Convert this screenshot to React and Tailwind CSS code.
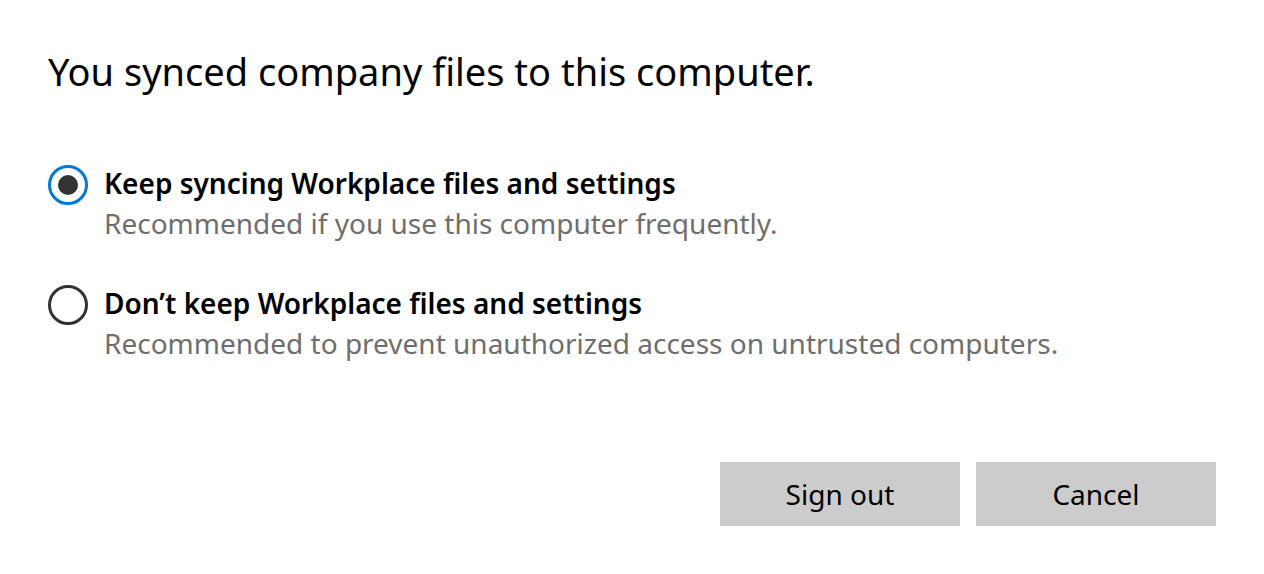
import React from "react";

function Radio({ checked }) {
  return checked ? (
    <div className="w-[40px] h-[40px] rounded-full border-[3px] border-[#0078d7] flex items-center justify-center shrink-0">
      <div className="w-[20px] h-[20px] rounded-full bg-[#333333]" />
    </div>
  ) : (
    <div className="w-[40px] h-[40px] rounded-full border-[3px] border-[#333333] shrink-0" />
  );
}

function Option({ checked, title, desc }) {
  return (
    <div className="flex items-start gap-[16px]">
      <div className="pt-[0px]">
        <Radio checked={checked} />
      </div>
      <div className="flex flex-col">
        <div className="text-[28px] leading-[36px] font-semibold text-black">{title}</div>
        <div className="text-[28px] leading-[36px] text-[#6e6e6e] mt-[4px]">{desc}</div>
      </div>
    </div>
  );
}

export default function App() {
  return (
    <div
      className="w-[1264px] h-[574px] bg-white flex flex-col px-[48px] pt-[46px]"
      style={{ fontFamily: '"Noto Sans", "Open Sans", sans-serif' }}
    >
      <h1 className="text-[38px] leading-[50px] text-black font-normal">
        You synced company files to this computer.
      </h1>
      <div className="flex flex-col gap-[44px] mt-[69px]">
        <Option
          checked
          title="Keep syncing Workplace files and settings"
          desc="Recommended if you use this computer frequently."
        />
        <Option
          title="Don’t keep Workplace files and settings"
          desc="Recommended to prevent unauthorized access on untrusted computers."
        />
      </div>
      <div className="flex justify-end gap-[16px] mt-auto mb-[48px]">
        <button className="w-[240px] h-[64px] bg-[#cccccc] text-[28px] text-black">Sign out</button>
        <button className="w-[240px] h-[64px] bg-[#cccccc] text-[28px] text-black">Cancel</button>
      </div>
    </div>
  );
}
